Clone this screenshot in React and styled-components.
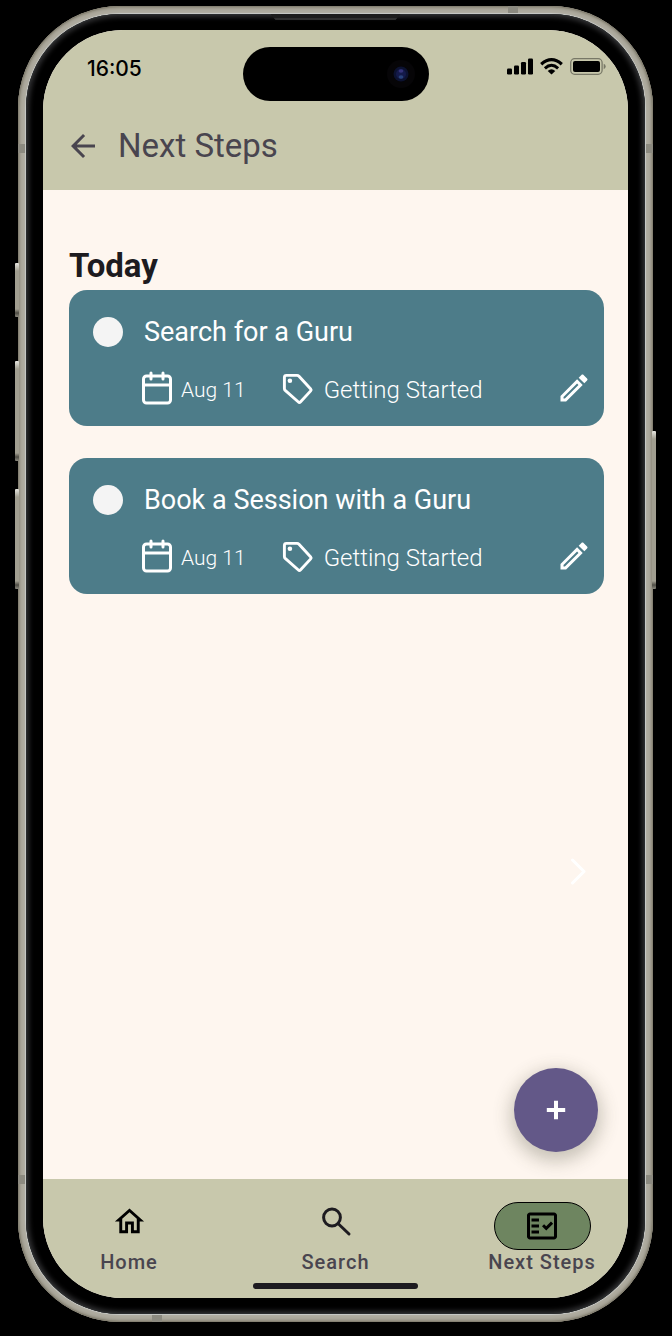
import React from "react";
import styled, { createGlobalStyle, css } from "styled-components";
import { Calendar } from "lucide-react";
import { MdArrowBack, MdOutlineEdit, MdOutlineHome, MdOutlineFactCheck } from "react-icons/md";

const GlobalStyle = createGlobalStyle`
  *, *::before, *::after { box-sizing: border-box; }
  body {
    margin: 0;
    background: #000;
    font-family: Roboto, "Liberation Sans", sans-serif;
    color: #1d1b20;
  }
  h1, h2, h3, p, ul { margin: 0; padding: 0; }
  ul { list-style: none; }
  button { border: 0; padding: 0; background: none; font: inherit; cursor: pointer; }
  svg { display: block; flex: none; }
`;

const Page = styled.div`
  display: flex;
  min-height: 100vh;
  padding: 6px 19px 14px 18px;
`;

const Metal = styled.div`
  position: relative;
  display: flex;
  flex: 1;
  min-width: 0;
  padding: 8px;
  border-radius: 102px;
  background: #aeab9f;
  box-shadow: inset 0 0 0 1px #858173, inset 0 0 3px 2px #8b8778;
`;

const Bezel = styled.div`
  display: flex;
  flex: 1;
  min-width: 0;
  padding: 16px 17px;
  border-radius: 94px;
  background: #000;
  box-shadow: 0 0 1px 1px #c8cac8, inset 0 0 1px 1px #2b2d2e, inset 0 0 5px 3px #303032;
`;

const Screen = styled.div`
  display: flex;
  flex: 1;
  flex-direction: column;
  min-width: 0;
  border-radius: 80px;
  overflow: hidden;
  background: #fef6ef;
`;

const SideButton = styled.span`
  position: absolute;
  top: ${(p) => p.$top}px;
  ${(p) => p.$side}: -3px;
  width: 4px;
  height: ${(p) => p.$length}px;
  border-radius: 1px;
  background: linear-gradient(#e6e5df, #a19e90 8px, #a19e90 calc(100% - 8px), #4f4d45 calc(100% - 4px), #8b897e);
`;

const Band = styled.span`
  position: absolute;
  background: #8c8a80;
  ${(p) =>
    p.$edge === "left" || p.$edge === "right"
      ? css`width: 7px; height: 9px;`
      : css`width: 10px; height: 7px;`}
  ${(p) => p.$edge}: 0;
  ${(p) => p.$from}: ${(p) => p.$offset}px;
`;

const Earpiece = styled.span`
  position: absolute;
  top: 8px;
  left: 50%;
  width: 130px;
  height: 6px;
  margin-left: -65px;
  background: #1d1d1d;
  border-bottom: 2px solid #303030;
  clip-path: polygon(0 0, 100% 0, calc(100% - 5px) 100%, 5px 100%);
`;

const TopArea = styled.header`
  padding-top: 17px;
  background: #c8c8ac;
`;

const StatusBar = styled.div`
  display: grid;
  grid-template-columns: 1fr 186px 1fr;
  align-items: start;
`;

const Time = styled.time`
  padding: 10px 0 0 44px;
  font: 500 21px/24px Inter, "Liberation Sans", sans-serif;
  color: #000;
`;

const Island = styled.div`
  display: flex;
  align-items: center;
  justify-content: flex-end;
  height: 54px;
  padding-right: 14px;
  border-radius: 27px;
  background: #000;
`;

const StatusIcons = styled.div`
  display: flex;
  justify-content: flex-end;
  gap: 7px;
  padding: 11px 22px 0 0;
`;

const TitleBar = styled.div`
  display: flex;
  align-items: center;
  gap: 17px;
  height: 89px;
  padding: 0 22px;
  color: #49454f;
`;

const IconButton = styled.button`
  display: flex;
  color: inherit;
`;

const Title = styled.h1`
  font-size: 33px;
  line-height: 40px;
  font-weight: 400;
`;

const Main = styled.main`
  display: flex;
  flex: 1;
  flex-direction: column;
  padding: 56px 24px 27px 26px;
`;

const SectionTitle = styled.h2`
  margin-bottom: 4px;
  font-size: 33px;
  line-height: 40px;
  font-weight: 700;
`;

const TaskList = styled.ul`
  display: flex;
  flex-direction: column;
  gap: 32px;
`;

const TaskCard = styled.li`
  display: flex;
  flex-direction: column;
  gap: 20px;
  padding: 24px 12px 20px 24px;
  border-radius: 18px;
  background: #4d7c89;
  color: #fff;
`;

const TaskHead = styled.label`
  display: flex;
  align-items: center;
  gap: 21px;
  height: 36px;
  font-size: 27px;
  line-height: 36px;
`;

const TaskCheck = styled.input`
  appearance: none;
  flex: none;
  width: 30px;
  height: 30px;
  margin: 0;
  border-radius: 50%;
  background: #f4f4f4;
  &:checked { background: #c8c8ac; }
`;

const TaskMeta = styled.div`
  display: flex;
  align-items: center;
  height: 36px;
  padding-left: 46px;
  font-weight: 300;
`;

const Due = styled.time`
  margin: 0 34px 0 6px;
  padding-top: 4px;
  font-size: 21px;
  line-height: 32px;
`;

const TagName = styled.span`
  flex: 1;
  margin-left: 8px;
  padding-top: 4px;
  font-size: 24px;
  line-height: 32px;
`;

const Actions = styled.div`
  display: flex;
  flex-direction: column;
  align-items: flex-end;
  margin-top: auto;
  padding-right: 6px;
`;

const NextButton = styled.button`
  display: flex;
  align-items: center;
  justify-content: center;
  width: 40px;
  height: 36px;
  margin-bottom: 179px;
`;

const AddButton = styled.button`
  position: relative;
  display: flex;
  align-items: center;
  justify-content: center;
  width: 84px;
  height: 84px;
  border-radius: 50%;
  background: #635888;
  box-shadow: 0 6px 18px 3px rgba(70, 70, 50, 0.3);
`;

const NavBar = styled.nav`
  padding: 23px 26px 9px;
  background: #c8c8ac;
`;

const NavItems = styled.div`
  display: flex;
  justify-content: space-between;
`;

const NavLink = styled.a`
  display: flex;
  flex-direction: column;
  align-items: center;
  width: 120px;
  color: #49454f;
  font-size: 20px;
  line-height: 24px;
  font-weight: 500;
  letter-spacing: 1px;
  text-decoration: none;
  white-space: nowrap;
`;

const NavIcon = styled.span`
  display: flex;
  align-items: center;
  justify-content: center;
  width: 97px;
  height: 48px;
  color: #000;
  ${(p) =>
    p.$active
      ? css`
          border: 1px solid #000;
          border-radius: 24px;
          background: #6e8560;
        `
      : css`padding-bottom: 9px;`}
`;

const HomeIndicator = styled.div`
  width: 165px;
  height: 6px;
  margin: 9px auto 0;
  border-radius: 3px;
  background: #1d1b20;
`;

const Camera = () => (
  <svg width="28" height="28" viewBox="0 0 28 28" aria-hidden="true">
    <circle cx="14" cy="14" r="14" fill="#060507" />
    <circle cx="14" cy="14" r="7.5" fill="#0c1230" />
    <circle cx="14" cy="14" r="5" fill="#141a4a" />
    <ellipse cx="14" cy="11" rx="2.4" ry="1.8" fill="#35337a" />
    <ellipse cx="14" cy="17" rx="2.4" ry="1.8" fill="#28427a" />
  </svg>
);

const Signal = () => (
  <svg width="26" height="17" viewBox="0 0 26 17" aria-hidden="true">
    <rect x="0" y="10.5" width="5" height="6" rx="1.2" />
    <rect x="7" y="7.5" width="5" height="9" rx="1.2" />
    <rect x="14" y="4" width="5" height="12.5" rx="1.2" />
    <rect x="21" y="0.5" width="5" height="16" rx="1.2" />
  </svg>
);

const Wifi = () => (
  <svg width="23" height="17" viewBox="0 0 23 17" aria-hidden="true">
    <path d="M1.2 6.3Q11.5-2.9 21.8 6.3" fill="none" stroke="#000" strokeWidth="3.2" />
    <path d="M4.9 10.3Q11.5 4.3 18.1 10.3" fill="none" stroke="#000" strokeWidth="3" />
    <path d="M11.5 16.6L7.7 12.9Q11.5 9.7 15.3 12.9Z" />
  </svg>
);

const Battery = () => (
  <svg width="36" height="17" viewBox="0 0 36 17" aria-hidden="true">
    <rect x="0.7" y="0.7" width="31.4" height="15.6" rx="4" fill="none" stroke="#000" strokeOpacity="0.4" strokeWidth="1.3" />
    <rect x="3" y="3" width="27" height="11" rx="2" />
    <path d="M33.7 5.8q2 .8 2 2.7t-2 2.7z" fillOpacity="0.4" />
  </svg>
);

const TagIcon = () => (
  <svg width="36" height="36" viewBox="0 0 36 36" fill="none" stroke="currentColor" strokeWidth="2.9" strokeLinejoin="round" aria-hidden="true">
    <path d="M4.4 7.4Q4.4 5.4 6.4 5.4H17Q18.2 5.4 19 6.2L30.7 18.9Q31.6 19.9 30.7 20.9L20.4 32Q19.4 33 18.4 32L5.2 20.4Q4.4 19.6 4.4 18.4Z" />
    <circle cx="9.9" cy="10.7" r="2.3" fill="currentColor" stroke="none" />
  </svg>
);

const SearchIcon = () => (
  <svg width="36" height="36" viewBox="0 0 36 36" fill="none" stroke="#1d1b20" strokeWidth="3" aria-hidden="true">
    <circle cx="14" cy="13.5" r="8.4" />
    <path d="M20 19.5L31 30" strokeLinecap="round" />
  </svg>
);

const tasks = [
  { title: "Search for a Guru", due: "Aug 11", tag: "Getting Started" },
  { title: "Book a Session with a Guru", due: "Aug 11", tag: "Getting Started" },
];

const destinations = [
  { label: "Home", href: "#home", icon: <MdOutlineHome size={35} /> },
  { label: "Search", href: "#search", icon: <SearchIcon /> },
  { label: "Next Steps", href: "#next-steps", icon: <MdOutlineFactCheck size={36} />, active: true },
];

const Task = ({ title, due, tag }) => (
  <TaskCard>
    <TaskHead>
      <TaskCheck type="checkbox" />
      {title}
    </TaskHead>
    <TaskMeta>
      <Calendar size={36} />
      <Due dateTime="08-11">{due}</Due>
      <TagIcon />
      <TagName>{tag}</TagName>
      <IconButton type="button" aria-label={`Edit ${title}`}>
        <MdOutlineEdit size={36} />
      </IconButton>
    </TaskMeta>
  </TaskCard>
);

export default function App() {
  return (
    <Page>
      <GlobalStyle />
      <Metal>
        <SideButton $side="left" $top={257} $length={54} />
        <SideButton $side="left" $top={355} $length={100} />
        <SideButton $side="left" $top={483} $length={100} />
        <SideButton $side="right" $top={425} $length={158} />
        <Bezel>
          <Screen>
            <TopArea>
              <StatusBar>
                <Time>16:05</Time>
                <Island><Camera /></Island>
                <StatusIcons>
                  <Signal />
                  <Wifi />
                  <Battery />
                </StatusIcons>
              </StatusBar>
              <TitleBar>
                <IconButton type="button" aria-label="Back">
                  <MdArrowBack size={36} />
                </IconButton>
                <Title>Next Steps</Title>
              </TitleBar>
            </TopArea>
            <Main>
              <SectionTitle>Today</SectionTitle>
              <TaskList>
                {tasks.map((task) => (
                  <Task key={task.title} {...task} />
                ))}
              </TaskList>
              <Actions>
                <NextButton type="button" aria-label="Next">
                  <svg width="16" height="28" viewBox="0 0 16 28" fill="none" stroke="#fff" strokeWidth="3" strokeLinecap="round" strokeLinejoin="round">
                    <path d="M2.5 3L14 14.5L2.5 26" />
                  </svg>
                </NextButton>
                <AddButton type="button" aria-label="Add step">
                  <svg width="20" height="20" viewBox="0 0 20 20" stroke="#fff" strokeWidth="4">
                    <path d="M10 0.8V19.2M0.8 10H19.2" />
                  </svg>
                </AddButton>
              </Actions>
            </Main>
            <NavBar>
              <NavItems>
                {destinations.map(({ label, href, icon, active }) => (
                  <NavLink key={label} href={href} aria-current={active ? "page" : undefined}>
                    <NavIcon $active={active}>{icon}</NavIcon>
                    {label}
                  </NavLink>
                ))}
              </NavItems>
              <HomeIndicator />
            </NavBar>
          </Screen>
        </Bezel>
        <Earpiece />
        <Band $edge="top" $from="right" $offset={135} />
        <Band $edge="bottom" $from="left" $offset={134} />
        <Band $edge="left" $from="top" $offset={138} />
        <Band $edge="right" $from="top" $offset={138} />
        <Band $edge="left" $from="bottom" $offset={138} />
        <Band $edge="right" $from="bottom" $offset={138} />
      </Metal>
    </Page>
  );
}
